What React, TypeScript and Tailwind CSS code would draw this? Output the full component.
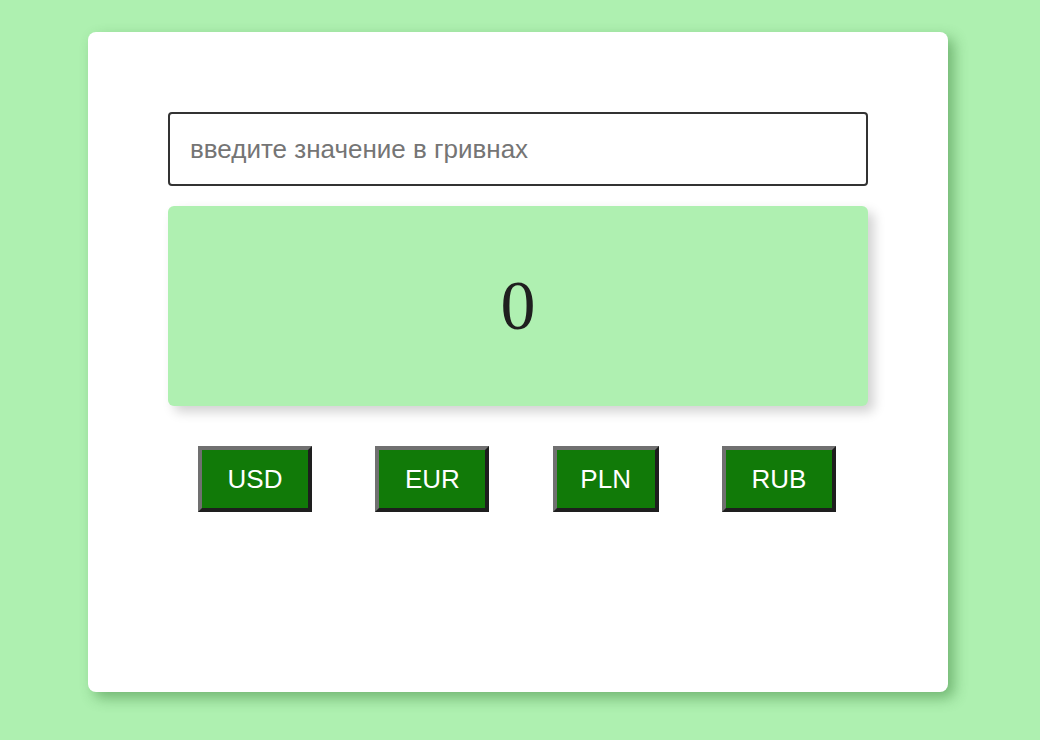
import React, { useState } from 'react';

const CURRENCIES = [
  { code: 'USD', width: 'w-[114px]' },
  { code: 'EUR', width: 'w-[114px]' },
  { code: 'PLN', width: 'w-[106px]' },
  { code: 'RUB', width: 'w-[114px]' },
];

export default function App() {
  const [value, setValue] = useState('');
  const [result] = useState(0);

  return (
    <div className="min-h-screen w-full bg-[#aef0b0] pt-8 pb-12 font-['Liberation_Sans',Arial,sans-serif]">
      <div className="ml-[88px] w-[860px] h-[660px] rounded-lg bg-white px-20 pt-20 shadow-[6px_6px_14px_rgba(40,110,40,0.45)]">
        <input
          type="text"
          value={value}
          onChange={(e) => setValue(e.target.value)}
          placeholder="введите значение в гривнах"
          className="block w-full h-[74px] rounded border-2 border-[#333333] px-5 text-[26px] text-[#222] placeholder:text-[#757575] outline-none"
        />

        <div className="mt-5 flex h-[200px] items-center justify-center rounded-md bg-[#aff0b1] shadow-[6px_6px_12px_rgba(0,0,0,0.18)]">
          <span className="font-['Liberation_Serif','Times_New_Roman',serif] text-[70px] leading-none text-[#1f1f1f]">
            {result}
          </span>
        </div>

        <div className="mt-10 flex justify-between pl-[30px] pr-[32px]">
          {CURRENCIES.map((c) => (
            <button
              key={c.code}
              className={`${c.width} h-[66px] border-4 border-t-[#707070] border-l-[#707070] border-b-[#1e1e1e] border-r-[#1e1e1e] bg-[#117a08] text-[26px] text-white`}
            >
              {c.code}
            </button>
          ))}
        </div>
      </div>
    </div>
  );
}
